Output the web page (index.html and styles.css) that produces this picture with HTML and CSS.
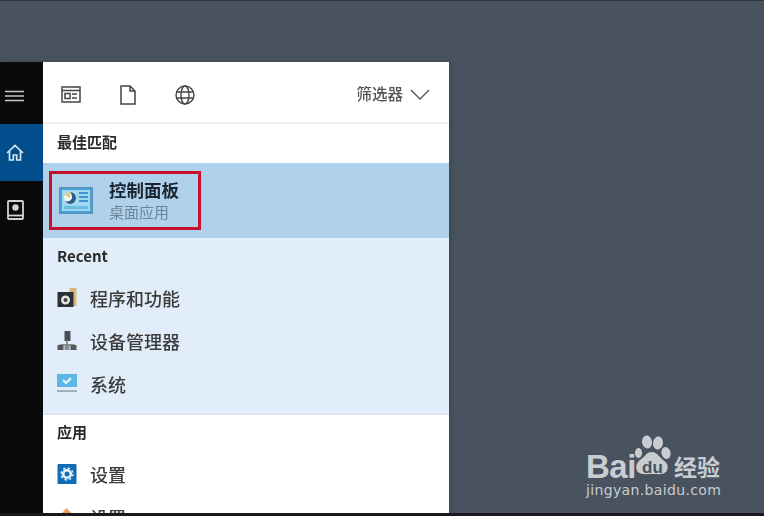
FILE: index.html
```html
<!DOCTYPE html>
<html lang="zh-CN">
<head>
    <meta charset="UTF-8">
    <meta name="viewport" content="width=device-width, initial-scale=1.0">
    <title>控制面板</title>
    <link rel="stylesheet" href="styles.css">
</head>
<body>
    <div class="screen">
        <div class="desktop">
            <div class="start">
                <nav class="rail">
                    <div class="rail-item rail-menu">
                        <svg width="19" height="12" viewBox="0 0 19 12"><path d="M0 1.500h19M0 6h19M0 10.500h19" stroke="#c4c6c8" stroke-width="1.600"/></svg>
                    </div>
                    <div class="rail-item rail-home">
                        <svg width="18" height="18" viewBox="0 0 18 18" fill="none" stroke="#d6e6f2" stroke-width="1.700"><path d="M1 9 9 1.500 17 9M3.500 7v9h3.800v-5h3.400v5h3.800V7"/></svg>
                    </div>
                    <div class="rail-item rail-book">
                        <svg width="17" height="20" viewBox="0 0 17 20" fill="none" stroke="#d2d2d2" stroke-width="1.800"><rect x="1" y="1" width="15" height="18" rx="1"/><path d="M1 15.500h15"/><circle cx="8.500" cy="7.500" r="3.200" fill="#d2d2d2" stroke="none"/></svg>
                    </div>
                </nav>
                <main class="panel">
                    <header class="toolbar">
                        <svg class="tool" width="20" height="17" viewBox="0 0 20 17" fill="none" stroke="#444" stroke-width="1.500"><rect x="1" y="1" width="18" height="15"/><path d="M1 4.500h18"/><rect x="4" y="7.500" width="5" height="5"/><path d="M11 8h5M11 12h5"/></svg>
                        <svg class="tool" width="16" height="20" viewBox="0 0 16 20" fill="none" stroke="#444" stroke-width="1.500"><path d="M1 1h9l5 5v13H1zM10 1v5h5"/></svg>
                        <svg class="tool" width="20" height="20" viewBox="0 0 20 20" fill="none" stroke="#444" stroke-width="1.400"><circle cx="10" cy="10" r="9"/><ellipse cx="10" cy="10" rx="4" ry="9"/><path d="M1.500 7h17M1.500 13h17"/></svg>
                        <div class="filter">
                            <span>筛选器</span>
                            <svg width="20" height="11" viewBox="0 0 20 11" fill="none" stroke="#555" stroke-width="1.400"><path d="M1 1l9 9 9-9"/></svg>
                        </div>
                    </header>

                    <h2 class="section-title best-title">最佳匹配</h2>
                    <section class="best">
                        <div class="hit">
                            <svg class="hit-icon" width="34" height="27" viewBox="0 0 34 27">
                                <rect x="0.500" y="0.500" width="33" height="26" fill="#4a9fd4" stroke="#5f93b4"/>
                                <rect x="3" y="3" width="28" height="21" fill="#9fd8f0"/>
                                <circle cx="11" cy="11" r="6" fill="#f1f5ee"/>
                                <path d="M11 5a6 6 0 0 1 0 12 6 6 0 0 1-5-3c3 1 6 0 7-3 0-3-1-5-2-6z" fill="#2a5a86"/>
                                <path d="M11 11 6 8a6 6 0 0 1 5-3z" fill="#e3cb6c"/>
                                <path d="M20 6h9M20 10h9M20 14h9" stroke="#3d94c8" stroke-width="2"/>
                                <rect x="5" y="19" width="24" height="3" fill="#6cbde2"/>
                            </svg>
                            <div>
                                <div class="hit-name">控制面板</div>
                                <div class="hit-type">桌面应用</div>
                            </div>
                        </div>
                    </section>

                    <section class="recent">
                        <h2 class="section-title recent-title">Recent</h2>
                        <div class="row">
                            <svg width="19" height="20" viewBox="0 0 19 20"><rect x="12" y="0" width="7" height="18" fill="#d9b77a"/><rect x="0" y="4" width="16" height="15" fill="#2c2f33"/><circle cx="8" cy="12" r="4.500" fill="#e4e4e4"/><circle cx="8" cy="12" r="2" fill="#444"/></svg>
                            <span>程序和功能</span>
                        </div>
                        <div class="row">
                            <svg width="19" height="20" viewBox="0 0 19 20"><rect x="7" y="0" width="6" height="10" fill="#4a4d52"/><path d="M9.500 9v5M2 14h15" stroke="#777" stroke-width="1.500"/><rect x="0" y="14" width="6" height="5" fill="#55585c"/><rect x="13" y="14" width="6" height="5" fill="#55585c"/><rect x="7" y="14" width="5" height="5" fill="#8a8d90"/></svg>
                            <span>设备管理器</span>
                        </div>
                        <div class="row">
                            <svg width="20" height="20" viewBox="0 0 20 20"><rect x="0" y="0" width="20" height="13" fill="#5cb6e6"/><path d="M6 6l3 3 5-5" stroke="#e8f6fc" stroke-width="2" fill="none"/><rect x="0" y="16" width="20" height="2" fill="#9fb0bc"/></svg>
                            <span>系统</span>
                        </div>
                    </section>

                    <section class="apps">
                        <h2 class="section-title apps-title">应用</h2>
                        <div class="row">
                            <svg width="19" height="20" viewBox="0 0 19 20"><rect width="19" height="20" rx="1" fill="#0f6cb6"/><circle cx="9.500" cy="10" r="3.800" fill="none" stroke="#e8f2fa" stroke-width="2.600"/><circle cx="9.500" cy="10" r="6" fill="none" stroke="#e8f2fa" stroke-width="1.400" stroke-dasharray="2.400 2.300"/></svg>
                            <span>设置</span>
                        </div>
                        <div class="row">
                            <svg width="19" height="20" viewBox="0 0 19 20"><path d="M1 10 9 1l9 9v10H1z" fill="#e8a35c"/></svg>
                            <span>设置</span>
                        </div>
                    </section>
                </main>
            </div>
        </div>
        <div class="taskbar"></div>
    </div>

    <div class="watermark">
        <div class="wm-top">
            <span class="wm-bai">Bai</span>
            <svg class="wm-paw" width="38" height="44" viewBox="0 0 38 44">
                <ellipse cx="13" cy="8" rx="5" ry="6.500" transform="rotate(-8 13 8)"/>
                <ellipse cx="24" cy="9" rx="5" ry="6.500" transform="rotate(8 24 9)"/>
                <ellipse cx="32" cy="19" rx="4.500" ry="6" transform="rotate(-15 32 19)"/>
                <ellipse cx="4.500" cy="19" rx="3.500" ry="5"/>
                <path d="M18 18c5 0 6 4 11 8 5 3 6 8 3 12-3 3-8 2-14 2s-11 1-14-2-2-9 2-12c5-3 6-8 12-8z"/>
            </svg>
            <span class="wm-du">du</span>
            <span class="wm-cn">经验</span>
        </div>
        <div class="wm-url">jingyan.baidu.com</div>
    </div>
</body>
</html>
```

FILE: styles.css
```css
:root {
    --desktop: #48535f;
    --rail: #0a0a0a;
    --best: #afd1ec;
    --recent: #e1eefa;
    --text: #3c3c3c;
    --wm: #c9ccd0;
}

* {
    margin: 0;
    padding: 0;
    box-sizing: border-box;
}

html, body {
    width: 764px;
    height: 516px;
    overflow: hidden;
}

body {
    font-family: "Noto Sans CJK SC", "Liberation Sans", sans-serif;
    background-color: var(--desktop);
    position: relative;
}

.screen {
    height: 516px;
    display: flex;
    flex-direction: column;
    border-top: 1px solid #2e3339;
    filter: blur(0.7px);
}

.desktop {
    flex: 1;
    min-height: 0;
    padding-top: 61px;
}

.taskbar {
    height: 3px;
    background-color: #17191c;
}

.start {
    width: 449px;
    height: 100%;
    display: flex;
    box-shadow: 3px 0 4px rgba(0, 0, 0, 0.12);
}

.rail {
    width: 43px;
    background-color: var(--rail);
}

.rail-item {
    display: flex;
    align-items: center;
    justify-content: center;
    padding-right: 13px;
}

.rail-menu { height: 62px; padding-top: 6px; padding-right: 14px; }
.rail-home { height: 57px; background-color: #024d8c; }
.rail-book { height: 58px; }

.panel {
    flex: 1;
    min-width: 0;
    background-color: #fff;
    overflow: hidden;
}

.toolbar {
    height: 62px;
    display: flex;
    align-items: center;
    padding: 5px 19px 0 18px;
    gap: 39px;
    border-bottom: 2px solid #eeeeee;
}

.filter {
    margin-left: auto;
    display: flex;
    align-items: center;
    gap: 7px;
    font-size: 15.5px;
    font-weight: 500;
    color: #555;
}

.filter span {
    padding-bottom: 4px;
}

.section-title {
    font-size: 15px;
    font-weight: 700;
    color: #2a2a2a;
    padding-left: 14px;
    line-height: 20px;
}

.best-title {
    height: 39px;
    padding-top: 8px;
}

.best {
    height: 75px;
    background-color: var(--best);
    padding: 8px 0 0 6px;
}

.hit {
    width: 152px;
    height: 59px;
    border: 3px solid #c4122b;
    display: flex;
    align-items: center;
    gap: 16px;
    padding: 0 0 1px 7px;
}

.hit-name {
    font-size: 17.5px;
    font-weight: 700;
    line-height: 23px;
    color: #1a2530;
}

.hit-type {
    font-size: 15px;
    line-height: 21px;
    color: #6d8498;
}

.recent {
    height: 177px;
    background-color: var(--recent);
    border-bottom: 1px solid #d9dfe8;
}

.recent-title {
    padding-top: 8px;
    height: 39px;
}

.row {
    height: 43px;
    display: flex;
    align-items: center;
    padding-left: 14px;
    padding-bottom: 3px;
    font-size: 18px;
    font-weight: 500;
    color: var(--text);
}

.recent .row {
    padding-bottom: 2px;
}

.row svg {
    width: 20px;
    flex-shrink: 0;
}

.row span {
    margin-left: 13px;
}

.apps-title {
    height: 39px;
    padding-top: 7px;
}

.watermark {
    position: absolute;
    left: 586px;
    top: 434px;
    width: 140px;
    color: var(--wm);
}

.wm-top {
    position: relative;
    height: 46px;
}

.wm-bai {
    position: absolute;
    left: 0;
    top: 16px;
    font-family: "Liberation Sans", sans-serif;
    font-weight: 700;
    font-size: 33px;
    line-height: 34px;
    letter-spacing: -0.5px;
}

.wm-paw {
    position: absolute;
    left: 48px;
    top: 0;
    fill: var(--wm);
}

.wm-du {
    position: absolute;
    left: 56px;
    top: 25px;
    font-family: "Liberation Sans", sans-serif;
    font-weight: 700;
    font-size: 17px;
    line-height: 18px;
    color: var(--desktop);
}

.wm-cn {
    position: absolute;
    left: 88px;
    top: 18px;
    font-size: 23px;
    font-weight: 700;
    line-height: 28px;
}

.wm-url {
    font-family: "DejaVu Sans", sans-serif;
    font-size: 14px;
    line-height: 18px;
    letter-spacing: 0.35px;
    margin-top: 1px;
}
```
